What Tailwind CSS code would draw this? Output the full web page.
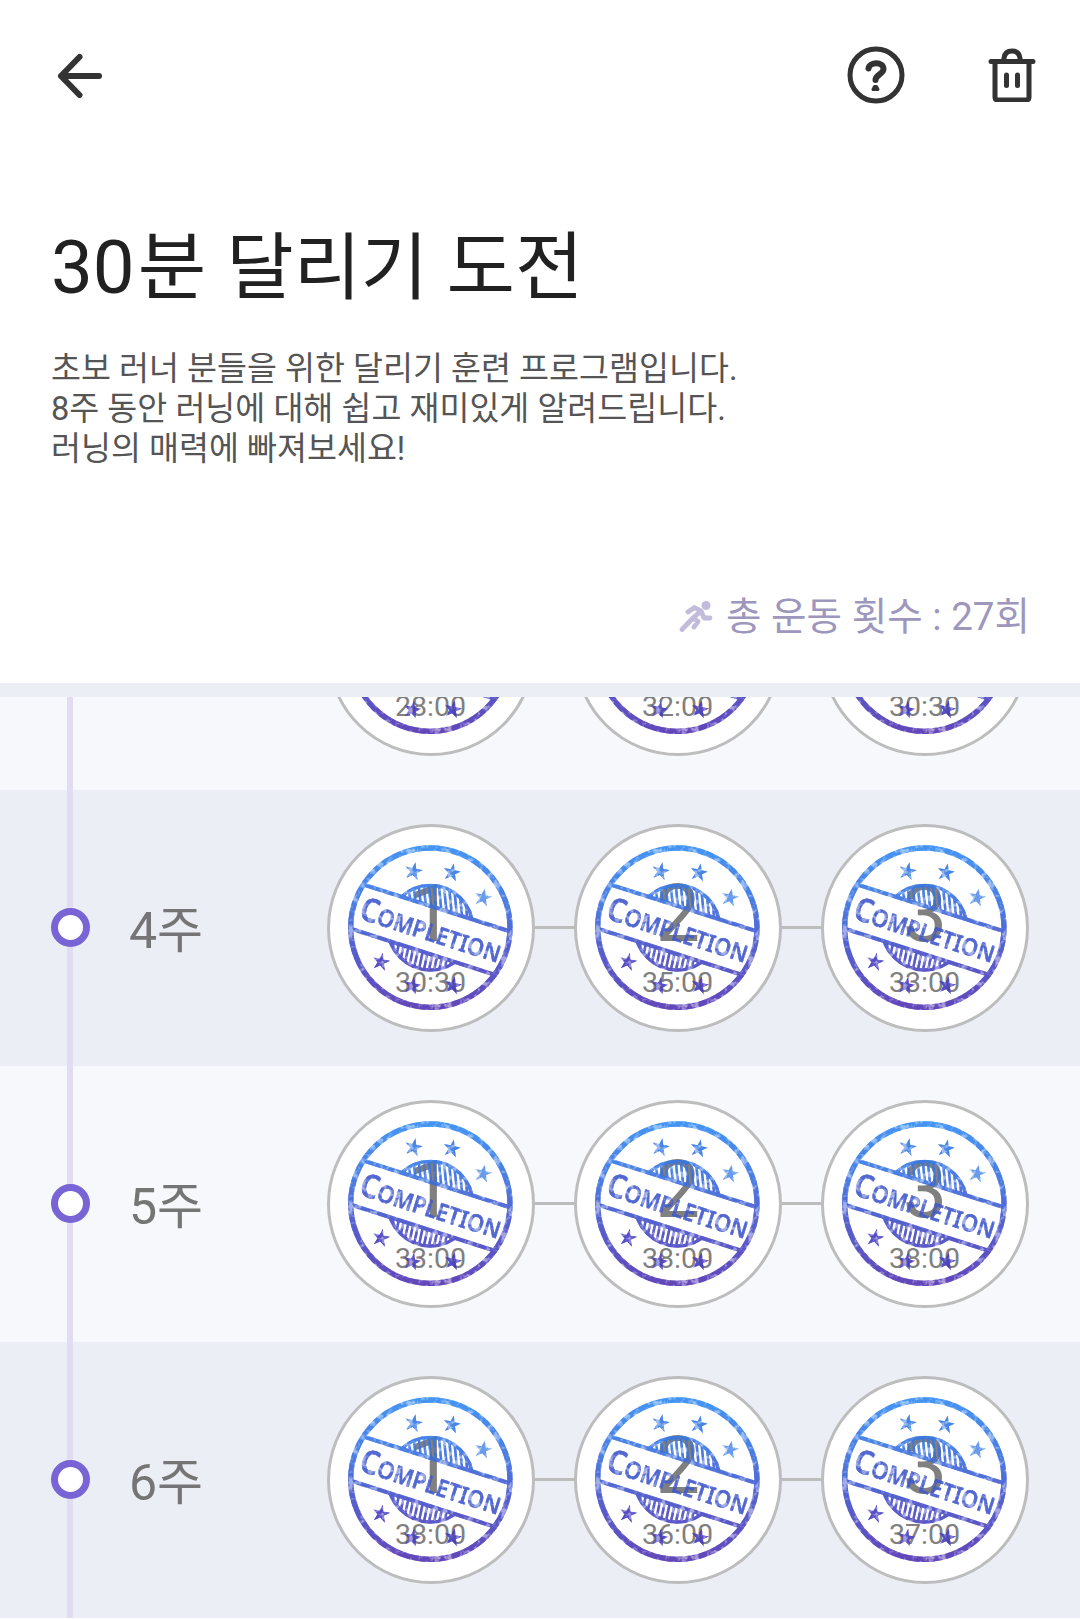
<!DOCTYPE html>
<html lang="ko">
<head>
	<meta charset="UTF-8">
	<meta name="viewport" content="width=device-width, initial-scale=1.0">
	<title>30분 달리기 도전</title>
	<script src="https://cdn.jsdelivr.net/npm/@tailwindcss/browser@4"></script>
</head>
<body class="h-[1619px] overflow-hidden bg-white font-[Roboto,'Noto_Sans_CJK_KR',sans-serif]">

	<!-- shared stamp -->
	<svg class="absolute" width="0" height="0">
		<defs>
			<linearGradient id="ink" gradientUnits="userSpaceOnUse" x1="331" y1="91" x2="331" y2="585">
				<stop offset="0" stop-color="#2f8af3"/>
				<stop offset="0.35" stop-color="#386fdf"/>
				<stop offset="0.6" stop-color="#4351cb"/>
				<stop offset="1" stop-color="#5232b2"/>
			</linearGradient>
			<filter id="worn" filterUnits="userSpaceOnUse" x="21" y="27" width="624" height="624">
				<feTurbulence type="fractalNoise" baseFrequency="0.05" numOctaves="3" seed="8" result="noise"/>
				<feColorMatrix in="noise" type="matrix" values="0 0 0 0 0  0 0 0 0 0  0 0 0 0 0  5 0 0 0 -1.5" result="holes"/>
				<feComposite in="SourceGraphic" in2="holes" operator="in" result="cut"/>
				<feComponentTransfer in="SourceGraphic" result="faint"><feFuncA type="linear" slope="0.55"/></feComponentTransfer>
				<feMerge><feMergeNode in="faint"/><feMergeNode in="cut"/></feMerge>
			</filter>
			<clipPath id="upper"><path d="M100 90H640V372L100 199Z"/></clipPath>
			<clipPath id="lower"><path d="M20 320L600 502V600H20Z"/></clipPath>
			<path id="star" d="M0 -27L6 -8L26 -8L10 4L17 24L0 12L-17 24L-10 4L-26 -8L-6 -8Z"/>
			<g id="hatch">
				<path d="M210 190l-12 300M225 190l-12 300M240 190l-12 300M255 190l-12 300M270 190l-12 300M285 190l-12 300M300 190l-12 300M315 190l-12 300M330 190l-12 300M345 190l-12 300M360 190l-12 300M375 190l-12 300M390 190l-12 300M405 190l-12 300M420 190l-12 300M435 190l-12 300M450 190l-12 300M465 190l-12 300"/>
			</g>
			<clipPath id="disc"><circle cx="331" cy="338" r="128"/></clipPath>
			<g id="stamp" filter="url(#worn)">
				<circle cx="331" cy="338" r="239" fill="none" stroke="url(#ink)" stroke-width="16"/>
				<g fill="none" stroke="url(#ink)">
					<path d="M128 208L573 350M92 341L530 481" stroke-width="12"/>
					<g clip-path="url(#upper)">
						<circle cx="331" cy="338" r="127" stroke-width="10"/>
						<g clip-path="url(#disc)" stroke-width="7.500" transform="rotate(-8 331 338)"><use href="#hatch"/></g>
					</g>
					<g clip-path="url(#lower)">
						<circle cx="331" cy="338" r="127" stroke-width="10"/>
						<g clip-path="url(#disc)" stroke-width="7.500"><use href="#hatch" transform="rotate(10 331 338)"/></g>
					</g>
				</g>
				<text transform="translate(113 310) rotate(17.7)" textLength="440" lengthAdjust="spacingAndGlyphs" font-family="Noto Sans, sans-serif" font-weight="600" font-size="98" fill="#4058cc" stroke="#4058cc" stroke-width="1">C<tspan font-size="72">OMPLETION</tspan></text>
				<g fill="#3478e4">
					<use href="#star" transform="translate(281 168) rotate(12)"/>
					<use href="#star" transform="translate(396 172) rotate(12)"/>
					<use href="#star" transform="translate(489 247) rotate(12)" opacity="0.7"/>
				</g>
				<g fill="#453abf">
					<use href="#star" transform="translate(183 440) rotate(12)"/>
					<use href="#star" transform="translate(277 512) rotate(12)"/>
					<use href="#star" transform="translate(399 511) rotate(12)"/>
				</g>
			</g>
		</defs>
	</svg>

	<header class="flex h-[683px] flex-col">
		<div class="flex h-[150px] items-center justify-between pr-[44px] pl-[56px]">
			<svg class="h-[46px] w-[48px]" viewBox="0 0 48 46" fill="none" stroke="#333" stroke-width="6" stroke-linecap="round" stroke-linejoin="round"><path d="M43 24H5M23.500 5L5 24L23.500 43"/></svg>
			<div class="flex items-center gap-[83px]">
				<svg class="h-[58px] w-[58px]" viewBox="0 0 58 58" fill="none" stroke="#333" stroke-linecap="round" stroke-linejoin="round">
					<circle cx="29" cy="29" r="26" stroke-width="5"/>
					<path d="M21.500 22.500C22.500 15.500 36.500 15.500 36.500 23C36.500 28 28.500 28.500 28.500 34" stroke-width="6"/>
					<path d="M27.500 40.500H29.500L31 43.500H26Z" fill="#333" stroke-width="3"/>
				</svg>
				<svg class="mb-[2px] h-[56px] w-[48px]" viewBox="0 0 48 56" fill="none" stroke="#333" stroke-width="5" stroke-linecap="round" stroke-linejoin="round">
					<path d="M3 15.500H45M7 15.500V51Q7 54 10 54H38Q41 54 41 51V15.500M16 15.500V12Q17 5 24 5Q31 5 32 12V15.500M18.500 29V39.500M29.500 29V39.500"/>
				</svg>
			</div>
		</div>
		<div class="px-[51px] pt-[63px]">
			<h1 class="text-[74.400px] leading-[110px] whitespace-nowrap text-[#212121]">30<span class="ml-[3px]">분</span> <span class="ml-[2px] text-[73px]">달리기</span> 도전</h1>
			<p class="mt-[26px] text-[32.600px] leading-[40px] whitespace-nowrap text-[#555]">초보 러너 분들을 위한 달리기 훈련 프로그램입니다.<br>8주 동안 러닝에 대해 쉽고 재미있게 알려드립니다.<br>러닝의 매력에 빠져보세요!</p>
		</div>
		<div class="mt-auto mb-[36px] flex items-center justify-end gap-[13px] pr-[50px] text-[38.600px] leading-[60px] text-[#9e97bd]">
			<svg class="h-[32px] w-[34px]" viewBox="0 0 34 32" fill="none" stroke="#c3bbdc" stroke-width="4.800" stroke-linecap="round" stroke-linejoin="round">
				<circle cx="27" cy="4.500" r="4.500" fill="#c3bbdc" stroke="none"/>
				<path d="M9 11L15.500 6.500L22 10L14 17L3 28.500M22 10L25 17H31M14 17L19 20.500L15 26"/>
			</svg>
			<span>총 운동 횟수 : 27회</span>
		</div>
	</header>

	<div class="h-[14px] bg-[#eceef6]"></div>

	<main class="flex h-[922px] flex-col justify-start overflow-hidden">
		<div id="weeks" class="-mt-[183px]"></div>
	</main>

	<template id="week">
		<section class="relative flex h-[276px] items-center justify-between pr-[51px] pl-[51px]">
			<div class="absolute top-0 left-[67px] h-full w-[6px] bg-[#e1dcf1]"></div>
			<div class="relative flex items-center gap-[39px]">
				<div class="mb-[2px] h-[39px] w-[39px] rounded-full border-[7px] border-[#7864d4] bg-white"></div>
				<span class="label pt-[5px] text-[50px] leading-[60px] text-[#757575]"></span>
			</div>
			<div class="days flex items-center"></div>
		</section>
	</template>
	<template id="day">
		<div class="relative h-[208px] w-[208px] rounded-full border-[3px] border-[#bdbdbd] bg-white text-center text-[#808080]">
			<div class="num pt-[40px] text-[79px] leading-[94px]"></div>
			<div class="time pt-[6px] pr-[1px] text-[28.500px] leading-[32px]"></div>
			<svg class="absolute -top-[3px] -left-[3px] h-[208px] w-[208px] opacity-90" viewBox="21 27 624 624"><use href="#stamp"/></svg>
		</div>
	</template>
</body>
<script>
const weeks = [
	['3주', ['28:00', '32:00', '30:30']],
	['4주', ['30:30', '35:00', '33:00']],
	['5주', ['33:00', '38:00', '38:00']],
	['6주', ['38:00', '36:00', '37:00']]
]

const $weeks = document.getElementById('weeks')

weeks.forEach((week, i) => {
	const row = document.getElementById('week').content.cloneNode(true)
	row.querySelector('section').classList.add(i % 2 ? 'bg-[#eceef6]' : 'bg-[#f7f8fc]')
	row.querySelector('.label').textContent = week[0]
	const $days = row.querySelector('.days')
	week[1].forEach((time, n) => {
		if (n) {
			const line = document.createElement('div')
			line.className = 'mb-[2px] h-[3px] w-[39px] bg-[#bdbdbd]'
			$days.appendChild(line)
		}
		const day = document.getElementById('day').content.cloneNode(true)
		day.querySelector('.num').textContent = n + 1
		day.querySelector('.time').textContent = time
		$days.appendChild(day)
	})
	$weeks.appendChild(row)
})
</script>
</html>
